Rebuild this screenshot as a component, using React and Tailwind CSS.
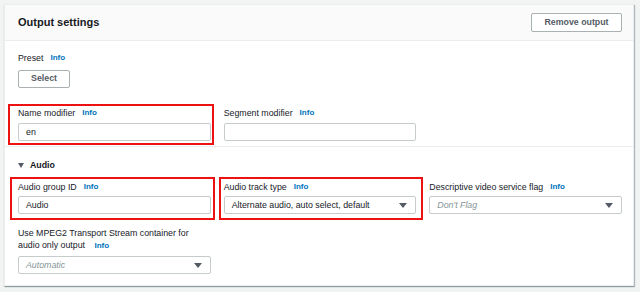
const font = { fontFamily: '"Liberation Sans", Arial, sans-serif' };

function Info() {
  return <span className="ml-[7px] text-[8px] font-bold text-[#0073bb]">Info</span>;
}

function Caret() {
  return (
    <svg width="8" height="5" viewBox="0 0 8 5" className="shrink-0">
      <path d="M0 0h8L4 5z" fill="#545b64" />
    </svg>
  );
}

function Label({ children }) {
  return (
    <div className="flex h-[12px] items-center text-[8.8px] leading-[12px] text-[#16191f]">{children}</div>
  );
}

function TextInput({ value }) {
  return (
    <div className="flex h-[18px] items-center rounded-[2px] border border-[#c6cccc] bg-white px-[7px] text-[8.8px] text-[#16191f]">
      {value}
    </div>
  );
}

function SelectBox({ value, placeholder }) {
  return (
    <div className="flex h-[18px] items-center justify-between rounded-[2px] border border-[#c6cccc] bg-white pl-[7px] pr-[8px] text-[8.8px]">
      {value ? (
        <span className="text-[#16191f]">{value}</span>
      ) : (
        <span className="italic text-[#879596]">{placeholder}</span>
      )}
      <Caret />
    </div>
  );
}

function Mark({ className }) {
  return <div className={`pointer-events-none absolute border-2 border-[#ee1111] ${className}`} />;
}

export default function App() {
  return (
    <div className="h-[292px] w-[640px] bg-[#f2f3f3] pl-[4px] pr-[6px] pt-[4px]" style={font}>
      <div className="border border-[#eaeded] bg-white shadow-[1px_1px_1px_0_rgba(0,28,36,0.25),0_1px_1px_0_rgba(0,28,36,0.2)]">
        <div className="flex h-[36px] items-center justify-between border-b border-[#eaeded] bg-[#fafafa] pl-[13px] pr-[11px]">
          <h2 className="text-[11px] font-bold text-[#16191f]">Output settings</h2>
          <button className="h-[19px] w-[91px] rounded-[2px] border border-[#a9b1b2] bg-white text-[8.8px] font-bold text-[#545b64]">
            Remove output
          </button>
        </div>

        <div className="pl-[13px] pr-[11px] pt-[11px]">
          <Label>
            Preset <Info />
          </Label>
          <button className="mt-[6px] h-[18px] w-[52px] rounded-[2px] border border-[#a9b1b2] bg-white text-[8.8px] font-bold text-[#545b64]">
            Select
          </button>

          <div className="mt-[19px] grid grid-cols-3 gap-x-[13px]">
            <div className="relative">
              <Mark className="-bottom-[4px] -left-[10px] -right-[3px] -top-[3px]" />
              <Label>
                Name modifier <Info />
              </Label>
              <div className="mt-[4px]">
                <TextInput value="en" />
              </div>
            </div>
            <div>
              <Label>
                Segment modifier <Info />
              </Label>
              <div className="mt-[4px]">
                <TextInput value="" />
              </div>
            </div>
          </div>
        </div>

        <div className="mt-[5px] border-t border-[#eaeded]" />

        <div className="pb-[11px] pl-[13px] pr-[11px] pt-[12px]">
          <div className="flex h-[12px] items-center gap-[6px] text-[8.8px] font-bold text-[#16191f]">
            <svg width="6" height="5" viewBox="0 0 6 5">
              <path d="M0 0h6L3 5z" fill="#545b64" />
            </svg>
            Audio
          </div>

          <div className="mt-[10px] grid grid-cols-3 gap-x-[13px]">
            <div className="relative">
              <Mark className="-bottom-[6px] -left-[8px] -right-[4px] -top-[4px]" />
              <Label>
                Audio group ID <Info />
              </Label>
              <div className="mt-[3px]">
                <TextInput value="Audio" />
              </div>
            </div>
            <div className="relative">
              <Mark className="-bottom-[6px] -left-[5px] -right-[7px] -top-[4px]" />
              <Label>
                Audio track type <Info />
              </Label>
              <div className="mt-[3px]">
                <SelectBox value="Alternate audio, auto select, default" />
              </div>
            </div>
            <div>
              <Label>
                Descriptive video service flag <Info />
              </Label>
              <div className="mt-[3px]">
                <SelectBox placeholder="Don't Flag" />
              </div>
            </div>
          </div>

          <div className="mt-[13px] w-[193px]">
            <div className="text-[8.8px] leading-[12px] text-[#16191f]">
              Use MPEG2 Transport Stream container for
              <br />
              audio only output <Info />
            </div>
            <div className="mt-[4px]">
              <SelectBox placeholder="Automatic" />
            </div>
          </div>
        </div>
      </div>
    </div>
  );
}
